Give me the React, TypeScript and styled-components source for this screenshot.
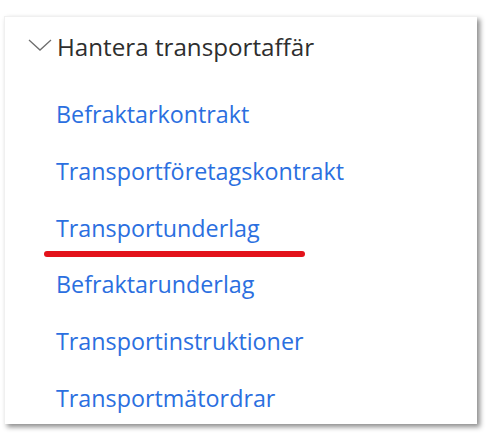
import React from 'react';
import styled, { createGlobalStyle } from 'styled-components';

const GlobalStyle = createGlobalStyle`
  html, body {
    margin: 0;
    padding: 0;
    background: #ffffff;
  }
  body {
    font-family: "Open Sans", "Noto Sans", sans-serif;
  }
`

const Page = styled.div`
  width: 492px;
  height: 434px;
  padding: 16px 0 0 4px;
  box-sizing: border-box;
`

const Card = styled.div`
  width: 473px;
  height: 408px;
  box-sizing: border-box;
  background: #ffffff;
  border-top: 1px solid #f0f0f0;
  border-left: 1px solid #f0f0f0;
  box-shadow: 3px 3px 5px rgba(0, 0, 0, 0.45);
  padding: 14px 0 0 23px;
`

const Header = styled.div`
  display: flex;
  align-items: center;
  gap: 5px;
  height: 32px;
  line-height: 32px;
  color: #2e2e2e;
  font-size: 24.2px;
`

const Chevron = styled.svg`
  width: 24px;
  height: 12px;
  margin-top: -5px;
`

const LinkList = styled.ul`
  list-style: none;
  margin: 0;
  padding: 23px 0 0 28px;
  display: flex;
  flex-direction: column;
`

interface ILinkProps {
  marked?: boolean;
}

const LinkItem = styled.li<ILinkProps>`
  position: relative;
  height: 56.8px;
  line-height: 56.8px;
  font-size: 23.3px;
  color: #2b6fe0;

  ${(props) => props.marked && `
    &::after {
      content: '';
      position: absolute;
      left: -12px;
      top: 51px;
      width: 261px;
      height: 6px;
      border-radius: 3px;
      background: #e3121a;
    }
  `}
`

const links = [
  'Befraktarkontrakt',
  'Transportföretagskontrakt',
  'Transportunderlag',
  'Befraktarunderlag',
  'Transportinstruktioner',
  'Transportmätordrar',
];

const App = () => {
  return (
    <Page>
      <GlobalStyle />
      <Card>
        <Header>
          <Chevron viewBox="0 0 24 12">
            <path d="M1 1 L12 11 L23 1" fill="none" stroke="#6e6e6e" strokeWidth="1.3" />
          </Chevron>
          Hantera transportaffär
        </Header>
        <LinkList>
          {links.map((l) => (
            <LinkItem key={l} marked={l === 'Transportunderlag'}>{l}</LinkItem>
          ))}
        </LinkList>
      </Card>
    </Page>
  )
}

export default App;
